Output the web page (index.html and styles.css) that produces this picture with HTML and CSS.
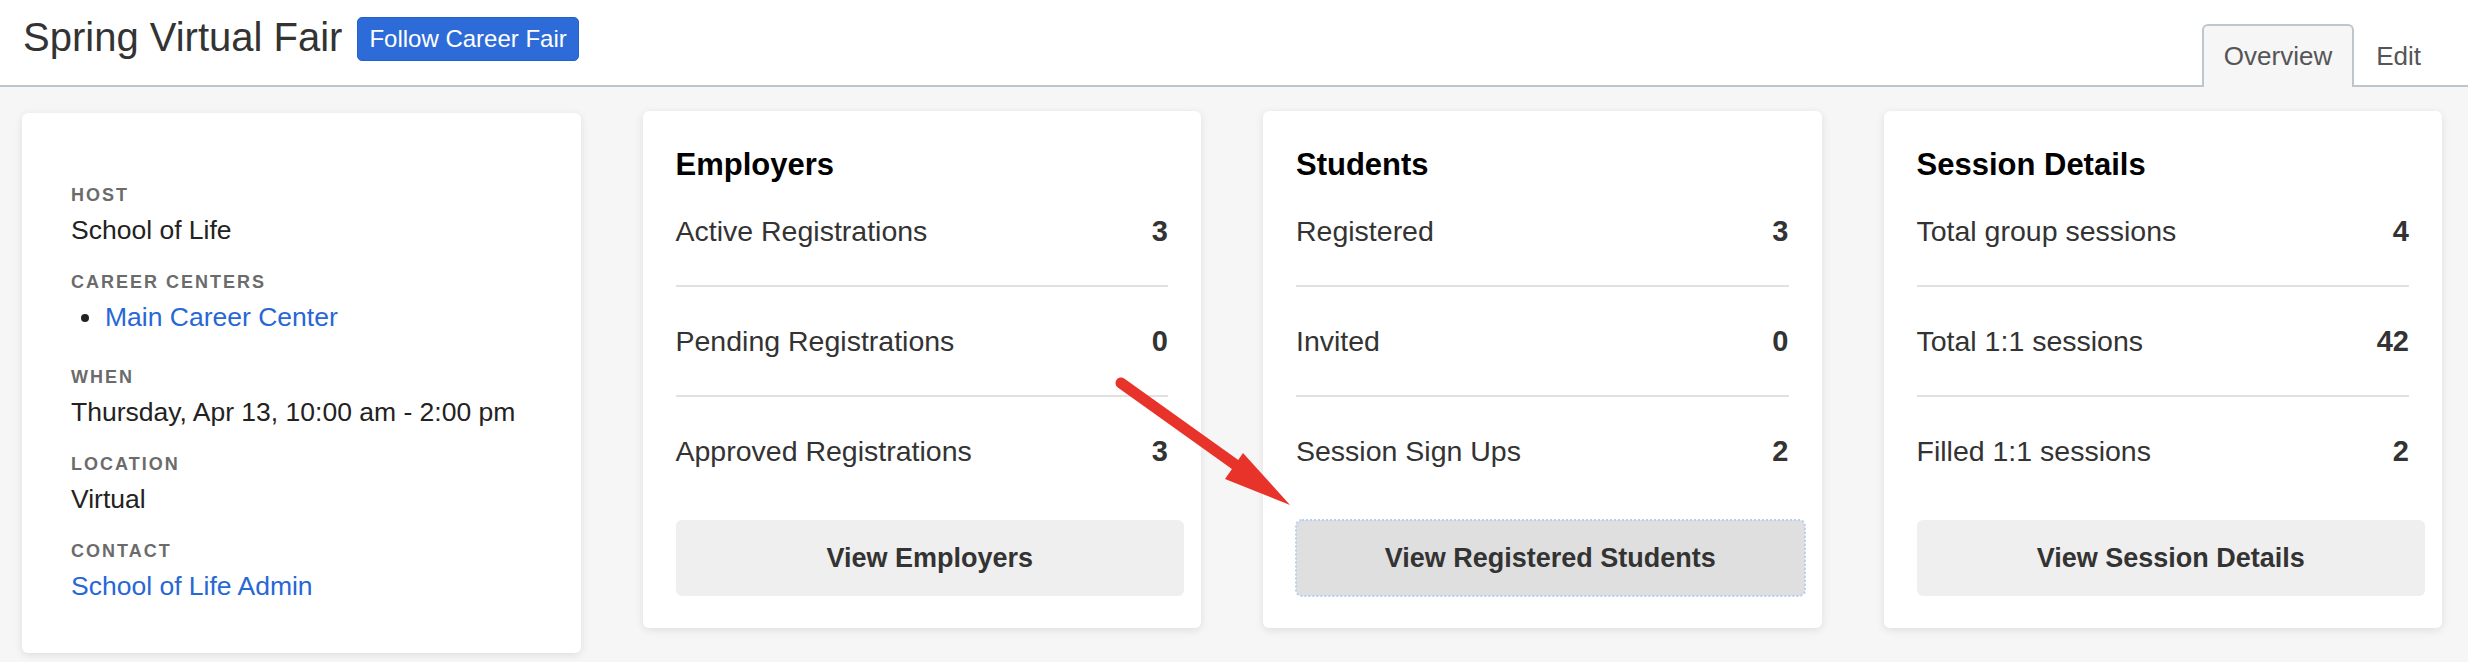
FILE: index.html
```html
<!DOCTYPE html>
<html lang="en">
<head>
<meta charset="utf-8">
<title>Spring Virtual Fair</title>
<link rel="stylesheet" href="styles.css">
</head>
<body>
<header class="topbar">
  <div class="title-group">
    <h1 class="fair-title">Spring Virtual Fair</h1>
    <button class="follow-btn" type="button">Follow Career Fair</button>
  </div>
  <nav class="tabs">
    <a class="tab active">Overview</a>
    <a class="tab">Edit</a>
  </nav>
</header>

<main class="overview">
  <section class="card info-card">
    <dl class="info-list">
      <dt class="info-label">Host</dt>
      <dd class="info-value">School of Life</dd>
      <dt class="info-label">Career Centers</dt>
      <dd class="info-value list-value">
        <ul class="centers">
          <li><span class="dot"></span><a class="link">Main Career Center</a></li>
        </ul>
      </dd>
      <dt class="info-label">When</dt>
      <dd class="info-value">Thursday, Apr 13, 10:00 am - 2:00 pm</dd>
      <dt class="info-label">Location</dt>
      <dd class="info-value">Virtual</dd>
      <dt class="info-label">Contact</dt>
      <dd class="info-value last"><a class="link">School of Life Admin</a></dd>
    </dl>
  </section>

  <section class="card stat-card">
    <h2 class="stat-title">Employers</h2>
    <div class="stat-row"><span>Active Registrations</span><span class="stat-value">3</span></div>
    <div class="stat-row"><span>Pending Registrations</span><span class="stat-value">0</span></div>
    <div class="stat-row"><span>Approved Registrations</span><span class="stat-value">3</span></div>
    <button class="view-btn" type="button">View Employers</button>
  </section>

  <section class="card stat-card">
    <h2 class="stat-title">Students</h2>
    <div class="stat-row"><span>Registered</span><span class="stat-value">3</span></div>
    <div class="stat-row"><span>Invited</span><span class="stat-value">0</span></div>
    <div class="stat-row"><span>Session Sign Ups</span><span class="stat-value">2</span></div>
    <button class="view-btn focused" type="button">View Registered Students</button>
  </section>

  <section class="card stat-card">
    <h2 class="stat-title">Session Details</h2>
    <div class="stat-row"><span>Total group sessions</span><span class="stat-value">4</span></div>
    <div class="stat-row"><span>Total 1:1 sessions</span><span class="stat-value">42</span></div>
    <div class="stat-row"><span>Filled 1:1 sessions</span><span class="stat-value">2</span></div>
    <button class="view-btn" type="button">View Session Details</button>
  </section>
</main>

<svg class="annotation" width="2468" height="662" viewBox="0 0 2468 662" aria-hidden="true">
  <line x1="1121" y1="383" x2="1240" y2="468" stroke="#e8332a" stroke-width="11" stroke-linecap="round"/>
  <polygon points="1243,453 1290,505 1225,479" fill="#e8332a"/>
</svg>
</body>
</html>
```

FILE: styles.css
```css
* { box-sizing: border-box; }

html, body {
  margin: 0;
  padding: 0;
}

body {
  position: relative;
  width: 2468px;
  height: 662px;
  overflow: hidden;
  background: #f6f6f6;
  font-family: "Liberation Sans", Arial, sans-serif;
  color: #333;
}

/* ---------- top bar ---------- */
.topbar {
  display: flex;
  justify-content: space-between;
  align-items: flex-start;
  height: 87px;
  background: #fff;
  border-bottom: 2px solid #bdc6cf;
}

.title-group {
  display: flex;
  align-items: flex-start;
  gap: 15px;
  padding-left: 23px;
}

.fair-title {
  margin: 14px 0 0;
  font-size: 40px;
  line-height: 46px;
  font-weight: 400;
  color: #333;
}

.follow-btn {
  margin-top: 17px;
  padding: 7px 11px;
  font-family: "Liberation Sans", Arial, sans-serif;
  font-size: 24px;
  line-height: 28px;
  color: #fff;
  background: #2d6cd8;
  border: 1px solid #2561cb;
  border-radius: 5px;
}

.tabs {
  display: flex;
  align-self: flex-end;
  margin-bottom: -2px;
  padding-right: 25px;
}

.tab {
  padding: 15px 20px 16px;
  font-size: 26px;
  line-height: 30px;
  color: #555;
  border: 2px solid transparent;
  border-bottom: 0;
  border-radius: 6px 6px 0 0;
}

.tab.active {
  background: #f6f6f6;
  border-color: #bdc6cf;
}

/* ---------- cards grid ---------- */
.overview {
  display: grid;
  grid-template-columns: repeat(4, 1fr);
  gap: 62px;
  align-items: start;
  padding: 24px 26px 0 22px;
}

.card {
  background: #fff;
  border-radius: 6px;
  box-shadow: 0 2px 8px rgba(0, 0, 0, 0.10);
}

/* ---------- info card ---------- */
.info-card {
  margin-top: 2px;
  padding: 71px 49px 52px;
}

.info-list {
  margin: 0;
}

.info-label {
  margin: 0 0 9px;
  font-size: 18px;
  line-height: 22px;
  font-weight: 700;
  letter-spacing: 2px;
  text-transform: uppercase;
  color: #6b6b6b;
}

.info-value {
  margin: 0 0 26px;
  font-size: 26.5px;
  line-height: 30px;
  color: #222;
}

.info-value.list-value {
  margin-bottom: 34px;
}

.info-value.last {
  margin-bottom: 0;
}

.centers {
  margin: 0;
  padding: 0;
  list-style: none;
}

.centers li {
  display: flex;
  align-items: center;
}

.dot {
  width: 8px;
  height: 8px;
  margin: 2px 16px 0 10px;
  border-radius: 50%;
  background: #222;
}

.link {
  color: #2767d6;
  text-decoration: none;
}

/* ---------- stat cards ---------- */
.stat-card {
  padding: 40px 17px 32px 33px;
}

.stat-title {
  margin: 0;
  font-size: 31px;
  line-height: 28px;
  font-weight: 700;
  color: #000;
}

.stat-row {
  display: flex;
  justify-content: space-between;
  align-items: baseline;
  margin-right: 16px;
  padding: 40px 0;
  font-size: 28.5px;
  line-height: 28px;
  color: #333;
  border-bottom: 2px solid #e1e1e1;
}

.stat-title + .stat-row {
  padding-top: 38px;
}

.stat-row:last-of-type {
  border-bottom: 0;
}

.stat-value {
  font-size: 29px;
  font-weight: 700;
  color: #333;
}

.view-btn {
  display: block;
  width: 100%;
  height: 76px;
  margin-top: 15px;
  padding: 0;
  font-family: "Liberation Sans", Arial, sans-serif;
  font-size: 27px;
  font-weight: 700;
  color: #333;
  background: #efefef;
  border: 0;
  border-radius: 6px;
}

.view-btn.focused {
  background: #dfdfdf;
  outline: 2px dotted #b3d0f4;
  outline-offset: -1px;
}

/* ---------- annotation overlay ---------- */
.annotation {
  position: absolute;
  top: 0;
  left: 0;
  pointer-events: none;
}
```
